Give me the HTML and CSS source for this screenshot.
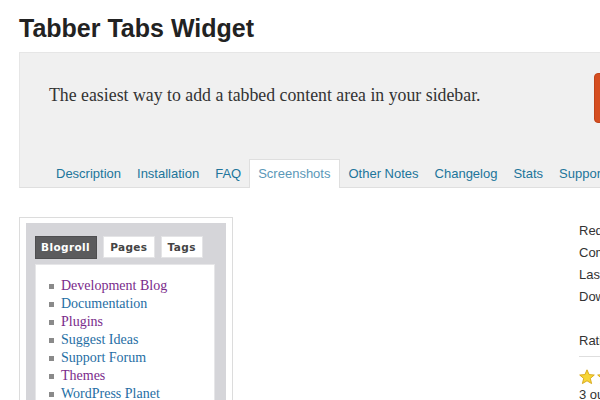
FILE: index.html
```html
<!DOCTYPE html>
<html>
<head>
<meta charset="utf-8">
<link rel="stylesheet" href="styles.css">
</head>
<body>
<div class="page">
  <h1 class="title">Tabber Tabs Widget</h1>
  <div class="plugin-head">
    <div class="head-top">
      <p class="desc">The easiest way to add a tabbed content area in your sidebar.</p>
      <span class="download">Download</span>
    </div>
    <nav class="tabs">
      <span class="tab">Description</span>
      <span class="tab">Installation</span>
      <span class="tab">FAQ</span>
      <span class="tab active">Screenshots</span>
      <span class="tab">Other Notes</span>
      <span class="tab">Changelog</span>
      <span class="tab">Stats</span>
      <span class="tab">Support</span>
    </nav>
  </div>
  <div class="main">
    <div class="shot">
      <div class="widget">
        <div class="wtabs">
          <span class="wtab on">Blogroll</span>
          <span class="wtab">Pages</span>
          <span class="wtab">Tags</span>
        </div>
        <ul class="wlist">
          <li class="v">Development Blog</li>
          <li>Documentation</li>
          <li class="v">Plugins</li>
          <li>Suggest Ideas</li>
          <li>Support Forum</li>
          <li class="v">Themes</li>
          <li>WordPress Planet</li>
        </ul>
      </div>
    </div>
    <div class="side">
      <ul class="meta">
        <li>Requires: 2.9 or higher</li>
        <li>Compatible up to: 3.0.5</li>
        <li>Last Updated: 2010-6-25</li>
        <li>Downloads: 21,402</li>
      </ul>
      <h4 class="rate-h">Ratings</h4>
      <div class="stars">
        <svg width="16" height="16" viewBox="0 0 16 16"><polygon points="8,0.8 10.1,5.6 15.3,6 11.3,9.4 12.6,14.6 8,11.8 3.4,14.6 4.7,9.4 0.7,6 5.9,5.6" fill="#f7d638" stroke="#d6a514" stroke-width="0.9"/></svg>
        <svg width="16" height="16" viewBox="0 0 16 16"><polygon points="8,0.8 10.1,5.6 15.3,6 11.3,9.4 12.6,14.6 8,11.8 3.4,14.6 4.7,9.4 0.7,6 5.9,5.6" fill="#f7d638" stroke="#d6a514" stroke-width="0.9"/></svg>
      </div>
      <div class="rate-t">3 out of 5 stars</div>
    </div>
  </div>
</div>
</body>
</html>
```
FILE: styles.css
```css
html, body {
  margin: 0;
  padding: 0;
  background: #fff;
  overflow: hidden;
}
.page {
  width: 600px;
  height: 400px;
  overflow: hidden;
  font-family: "Liberation Sans", Arial, sans-serif;
}
.title {
  margin: 0;
  padding: 13px 0 0 19px;
  height: 52px;
  box-sizing: border-box;
  font-size: 25px;
  line-height: 30px;
  font-weight: bold;
  color: #222;
}
.plugin-head {
  margin-left: 19px;
  width: 620px;
  height: 136px;
  box-sizing: border-box;
  background: #f0f0f0;
  border: 1px solid #e6e6e6;
  border-bottom: 1px solid #dfdfdf;
  display: flex;
  flex-direction: column;
  justify-content: space-between;
}
.head-top {
  display: flex;
  align-items: flex-start;
  justify-content: space-between;
  padding-top: 20px;
}
.desc {
  margin: 0;
  padding: 11px 0 0 29px;
  font-family: "Liberation Serif", "Times New Roman", serif;
  font-size: 17.8px;
  line-height: 22px;
  color: #333;
  white-space: nowrap;
}
.download {
  display: block;
  flex-shrink: 0;
  width: 70px;
  height: 48px;
  margin-right: -28px;
  background: #d54e21;
  border: 1px solid #c0431a;
  border-radius: 4px;
  color: #fff;
  font-size: 13px;
  line-height: 48px;
  text-align: center;
  text-indent: -200px;
  overflow: hidden;
}
.tabs {
  display: flex;
  padding-left: 28px;
  margin-bottom: -1px;
}
.tab {
  padding: 0 8px;
  font-size: 13px;
  line-height: 27px;
  height: 28px;
  color: #21759b;
  white-space: nowrap;
}
.tab.active {
  background: #fff;
  border: 1px solid #dfdfdf;
  border-bottom: none;
  color: #5b98b8;
  padding: 0 9px 0 8px;
  line-height: 27px;
  margin-top: -1px;
}
.main {
  display: flex;
  align-items: flex-start;
  padding-top: 29px;
}
.shot {
  flex-shrink: 0;
  margin-left: 19px;
  width: 214px;
  height: 200px;
  box-sizing: border-box;
  border: 1px solid #dcdcdc;
  border-bottom: none;
  padding: 5px 6px 0 6px;
  background: #fff;
}
.widget {
  background: #d5d5d9;
  height: 100%;
  padding: 13px 11px 0 9px;
  box-sizing: border-box;
}
.wtabs {
  display: flex;
  gap: 6px;
  height: 23px;
}
.wtab {
  display: block;
  height: 22px;
  box-sizing: border-box;
  padding: 0 6px;
  background: #fff;
  border: 1px solid #e4e4e6;
  font-family: "DejaVu Sans", Verdana, sans-serif;
  font-weight: bold;
  font-size: 10.5px;
  letter-spacing: 0.4px;
  line-height: 21px;
  color: #444;
}
.wtab.on {
  height: 23px;
  background: #5b5b5d;
  border-color: #4e4e50;
  color: #fff;
  padding: 0 6px 0 5px;
}
.wlist {
  list-style: none;
  margin: 5px 0 0 0;
  padding: 12px 0 0 13px;
  background: #fff;
  border: 1px solid #e6e6e8;
  border-bottom: none;
  height: 200px;
  box-sizing: border-box;
}
.wlist li {
  display: flex;
  align-items: center;
  font-family: "Liberation Serif", "Times New Roman", serif;
  font-size: 14px;
  line-height: 18px;
  color: #1f6ea4;
}
.wlist li::before {
  content: "";
  width: 5px;
  height: 5px;
  background: #8a8a8a;
  margin-right: 7px;
}
.wlist li.v {
  color: #7a2b8b;
}
.side {
  margin-left: 346px;
  white-space: nowrap;
  color: #333;
  font-size: 13px;
}
.meta {
  list-style: none;
  margin: 0;
  padding: 3px 0 0 0;
}
.meta li {
  line-height: 22px;
}
.rate-h {
  margin: 23px 0 0 0;
  padding-bottom: 5px;
  border-bottom: 1px solid #dedede;
  font-size: 13px;
  font-weight: normal;
  line-height: 20px;
  width: 60px;
}
.stars {
  display: flex;
  gap: 2px;
  margin-top: 12px;
  height: 17px;
}
.rate-t {
  line-height: 18px;
}
```
